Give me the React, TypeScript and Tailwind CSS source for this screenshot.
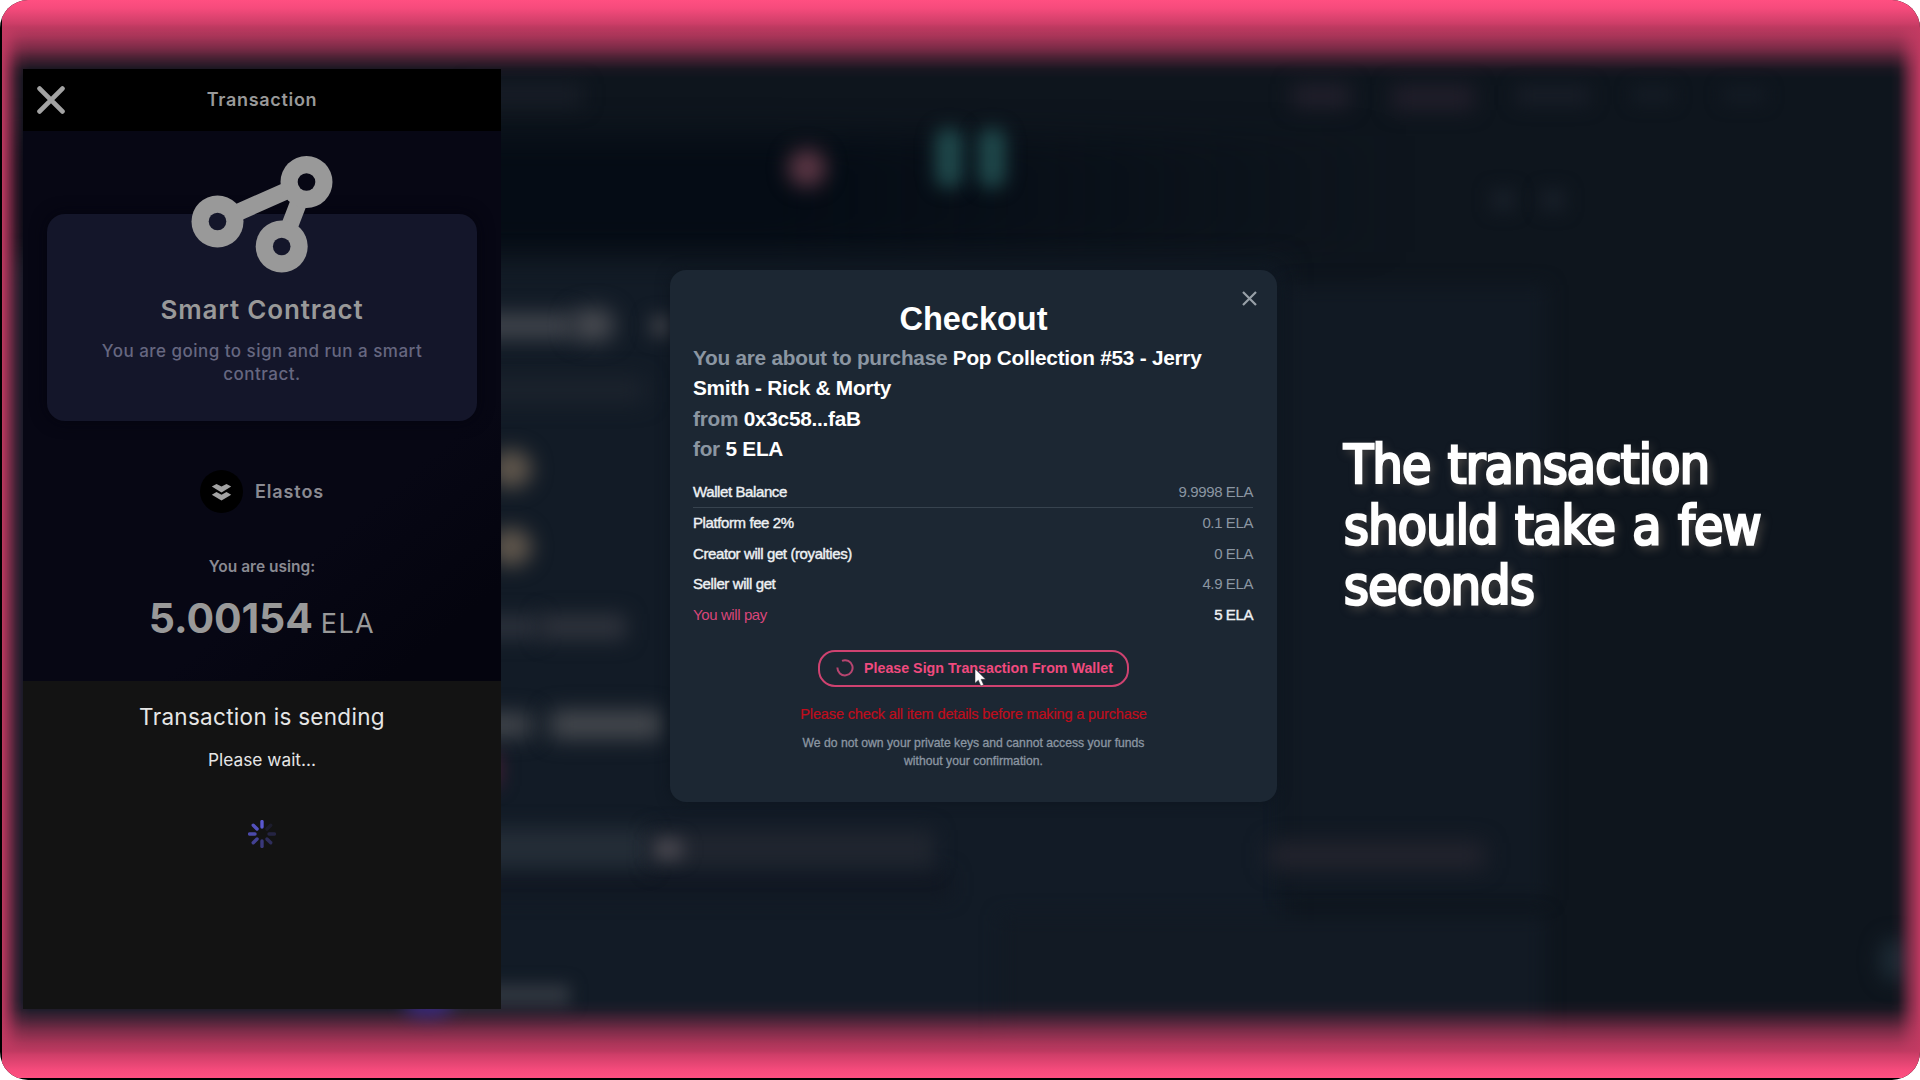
import React from "react";

const glows: string[] = [
  // page bands
  "left-[0px] top-[136px] w-[1400px] h-[116px] bg-[linear-gradient(90deg,#050c15_0%,#050c15_55%,#0e151d00_100%)] blur-[16px]",
  "left-[0px] top-[262px] w-[1285px] h-[770px] bg-[#121b26] blur-[12px]",
  "left-[1285px] top-[285px] w-[262px] h-[615px] bg-[#111923] blur-[9px]",
  "left-[1000px] top-[915px] w-[545px] h-[130px] bg-[#121a24] blur-[9px]",
  "left-[470px] top-[872px] w-[480px] h-[24px] bg-[#111722] blur-[10px]",
  // navigation
  "left-[470px] top-[84px] w-[112px] h-[22px] bg-[#181d27] blur-[10px]",
  "left-[1292px] top-[84px] w-[58px] h-[24px] bg-[#211f2b] blur-[10px]",
  "left-[1392px] top-[85px] w-[82px] h-[25px] bg-[#211e2a] blur-[10px]",
  "left-[1516px] top-[86px] w-[74px] h-[19px] bg-[#181d27] blur-[9px]",
  "left-[1632px] top-[86px] w-[42px] h-[18px] bg-[#141b24] blur-[8px]",
  "left-[1722px] top-[86px] w-[44px] h-[18px] bg-[#131a23] blur-[8px]",
  "left-[1490px] top-[188px] w-[26px] h-[24px] bg-[#161d26] blur-[8px]",
  "left-[1540px] top-[188px] w-[26px] h-[24px] bg-[#161d26] blur-[8px]",
  // artwork
  "left-[788px] top-[149px] w-[38px] h-[38px] rounded-full bg-[#5b3644] blur-[10px]",
  "left-[935px] top-[128px] w-[28px] h-[60px] rounded-[12px] bg-[#1f484b] blur-[9px]",
  "left-[978px] top-[128px] w-[28px] h-[60px] rounded-[12px] bg-[#1f484b] blur-[9px]",
  // item details
  "left-[440px] top-[315px] w-[134px] h-[22px] bg-[#484b52] blur-[11px]",
  "left-[572px] top-[309px] w-[42px] h-[32px] rounded-[14px] bg-[#4a4c52] blur-[11px]",
  "left-[650px] top-[316px] w-[30px] h-[20px] bg-[#3c3f46] blur-[9px]",
  "left-[440px] top-[378px] w-[205px] h-[24px] bg-[#1c232d] blur-[11px]",
  "left-[490px] top-[450px] w-[42px] h-[38px] rounded-full bg-[#5e554b] blur-[10px]",
  "left-[490px] top-[528px] w-[42px] h-[38px] rounded-full bg-[#5e554b] blur-[10px]",
  "left-[440px] top-[616px] w-[100px] h-[22px] bg-[#2d323c] blur-[10px]",
  "left-[540px] top-[614px] w-[86px] h-[26px] bg-[#2e323b] blur-[10px]",
  "left-[440px] top-[714px] w-[92px] h-[22px] bg-[#484b50] blur-[11px]",
  "left-[550px] top-[711px] w-[112px] h-[27px] bg-[#484b50] blur-[11px]",
  "left-[484px] top-[754px] w-[16px] h-[32px] bg-[#4a1e34] blur-[9px]",
  "left-[440px] top-[828px] w-[210px] h-[40px] bg-[#242d37] blur-[10px]",
  "left-[650px] top-[830px] w-[284px] h-[38px] bg-[#20252f] blur-[10px]",
  "left-[654px] top-[840px] w-[28px] h-[18px] bg-[#4e4c54] blur-[9px]",
  "left-[440px] top-[984px] w-[130px] h-[22px] bg-[#30363f] blur-[8px]",
  "left-[1268px] top-[843px] w-[216px] h-[25px] bg-[#24242e] blur-[11px]",
  "left-[1880px] top-[938px] w-[30px] h-[44px] rounded-full bg-[#1d2a34] blur-[10px]",
];

function Backdrop() {
  return (
    <div className="absolute inset-0 overflow-hidden">
      <div className="absolute inset-0 overflow-hidden bg-[#0e151d] [mask-composite:intersect] [mask-image:linear-gradient(180deg,#0000_24px,#0002_36px,#0006_49px,#000a_58px,#000e_69px,#000_78px,#000_1000px,#000e_1009px,#000a_1020px,#0006_1030px,#0002_1043px,#0000_1054px),linear-gradient(90deg,#0000_0px,#0003_4px,#0007_9px,#000b_14px,#000e_20px,#000_28px,#000_1889px,#000e_1896px,#000a_1902px,#0005_1909px,#0000_1918px)]">
        <div className="absolute top-0 left-[-2px] h-[1080px] w-[1920px]">
          {glows.map((g) => (
            <div key={g} className={`absolute ${g}`} />
          ))}
        </div>
      </div>
      <div className="absolute top-[984px] left-[402px] h-[32px] w-[48px] rounded-full bg-[#4a30a0] opacity-75 blur-[9px]" />
    </div>
  );
}

function NetworkIcon() {
  return (
    <svg className="h-[118px] w-[144px]" viewBox="190 155 144 118" fill="none">
      <path d="M217.5 221.5L306.5 182L281.7 246.5" stroke="#999" strokeWidth="17" />
      <g fill="#999">
        <circle cx="217.5" cy="221.5" r="26" />
        <circle cx="306.5" cy="182" r="26" />
        <circle cx="281.7" cy="246.5" r="26" />
      </g>
      <circle cx="217.5" cy="221.5" r="8.8" fill="#14162a" />
      <circle cx="306.5" cy="182" r="8.8" fill="#070714" />
      <circle cx="281.7" cy="246.5" r="8.8" fill="#14162a" />
    </svg>
  );
}

function ElastosLogo() {
  return (
    <svg className="h-[43px] w-[43px]" viewBox="0 0 43 43">
      <circle cx="21.5" cy="21.5" r="21.5" fill="#000" />
      <g fill="#a3a3a3">
        <path d="M11.8 16.6L16.5 14L21.5 16.5L26.5 14L31.2 16.6L21.5 22.6Z" />
        <path d="M11.8 24.8L16.5 22L21.5 24.7L26.5 22L31.2 24.8L21.5 30.6Z" />
      </g>
    </svg>
  );
}

function Spokes() {
  const opacities = [1, 0.13, 0.25, 0.38, 0.55, 0.68, 0.8, 0.9];
  return (
    <svg className="h-7 w-7" viewBox="-14 -14 28 28">
      {opacities.map((o, i) => (
        <path key={i} d="M0 -12.4V-7" stroke="#5a58d0" strokeWidth="3.4" strokeLinecap="round" opacity={o} transform={`rotate(${i * 45})`} />
      ))}
    </svg>
  );
}

function Phone() {
  return (
    <aside className="flex h-[940px] w-[478px] shrink-0 flex-col bg-[#131313] font-[Inter,sans-serif] text-[#999]">
      <header className="grid h-[62px] shrink-0 grid-cols-[56px_1fr_56px] items-center bg-black">
        <svg className="ml-[14px] h-7 w-7" viewBox="0 0 28 28" stroke="#a3a3a3" strokeWidth="4.8" strokeLinecap="round">
          <path d="M2.6 2.6L25.4 25.4M25.4 2.6L2.6 25.4" />
        </svg>
        <h1 className="text-center text-[18px] leading-[26px] font-semibold tracking-[0.7px]">Transaction</h1>
      </header>
      <section className="flex h-[550px] shrink-0 flex-col items-center bg-[linear-gradient(140deg,#070714_0%,#070714_70%,#04040e_90%)]">
        <div className="mt-[83px] flex h-[207px] w-[430px] flex-col items-center rounded-[18px] bg-[#14162a] shadow-[0_0_16px_#04040f]">
          <div className="mt-[-59px] h-[118px]">
            <NetworkIcon />
          </div>
          <h2 className="mt-[20px] text-[26px] leading-[34px] font-semibold tracking-[0.85px]">Smart Contract</h2>
          <p className="mt-[13px] w-[340px] text-center text-[17px] leading-[23px] font-medium tracking-[0.48px] text-[#666780]">
            You are going to sign and run a smart contract.
          </p>
        </div>
        <div className="mt-[49px] flex h-[43px] items-center gap-[12px]">
          <ElastosLogo />
          <span className="text-[18px] font-semibold tracking-[0.9px] text-[#8a8a92]">Elastos</span>
        </div>
        <div className="mt-[43px] text-[15.5px] leading-[22px] font-semibold text-[#8a8a92]">You are using:</div>
        <div className="mt-[15px] flex items-baseline gap-[8px] leading-[50px]">
          <span className="text-[41px] font-bold tracking-[-0.1px]">5.00154</span>
          <span className="text-[27px] tracking-[1.4px]">ELA</span>
        </div>
      </section>
      <section className="flex flex-col items-center text-[#e6e6e6]">
        <div className="mt-[21px] text-[22.5px] leading-[30px] tracking-[0.3px]">Transaction is sending</div>
        <div className="mt-[16px] text-[17.3px] leading-[24px]">Please wait...</div>
        <div className="mt-[48px]">
          <Spokes />
        </div>
      </section>
    </aside>
  );
}

const rows = [
  { label: "Platform fee 2%", value: "0.1 ELA" },
  { label: "Creator will get (royalties)", value: "0 ELA" },
  { label: "Seller will get", value: "4.9 ELA" },
];

function Checkout() {
  return (
    <section className="relative mt-[201px] ml-[169px] flex h-[532px] w-[607px] shrink-0 flex-col rounded-[16px] bg-[#1c2733] px-[24px] font-['Liberation_Sans',Arial,sans-serif] text-white shadow-[0_0_14px_#0d151e]">
      <svg className="absolute top-[21px] right-[20px] h-[15px] w-[15px]" viewBox="0 0 15 15" stroke="#98a0a8" strokeWidth="2.2">
        <path d="M1 1L14 14M14 1L1 14" />
      </svg>
      <h2 className="mt-[29px] text-center text-[32.5px] leading-[40px] font-bold">Checkout</h2>
      <p className="mt-[4px] -ml-px text-[20.8px] leading-[30.4px] font-bold tracking-[-0.26px]">
        <span className="text-[#8b96a2]">You are about to purchase</span> Pop Collection #53 - Jerry
        <br />
        Smith - Rick &amp; Morty
        <br />
        <span className="text-[#8b96a2]">from</span> 0x3c58...faB
        <br />
        <span className="text-[#8b96a2]">for</span> 5 ELA
      </p>
      <div className="mt-[12px] -ml-px text-[15px] tracking-[-0.4px] text-[#8b96a2]">
        <div className="flex h-[31px] items-center justify-between border-b border-[#37434f] pt-[2px]">
          <span className="text-[#eef1f4] [-webkit-text-stroke:0.4px_#eef1f4]">Wallet Balance</span>
          <span>9.9998 ELA</span>
        </div>
        {rows.map((r) => (
          <div key={r.label} className="flex h-[30.5px] items-center justify-between pt-px">
            <span className="text-[#eef1f4] [-webkit-text-stroke:0.4px_#eef1f4]">{r.label}</span>
            <span>{r.value}</span>
          </div>
        ))}
        <div className="flex h-[30.5px] items-center justify-between pt-[2px]">
          <span className="text-[#d9467a]">You will pay</span>
          <span className="text-[#eef1f4] [-webkit-text-stroke:0.4px_#eef1f4]">5 ELA</span>
        </div>
      </div>
      <button className="relative mt-[20px] flex h-[37px] w-[311px] shrink-0 items-center self-center rounded-[17px] border-2 border-[#cf4270] pl-[16px] text-[14.25px] font-bold text-[#f04a7e]">
        <svg className="mr-[10px] h-[18px] w-[18px]" viewBox="0 0 18 18" fill="none" stroke="#b84570" strokeWidth="2">
          <path d="M6 1.8A7.6 7.6 0 1 1 1.4 8.6" />
        </svg>
        <span className="pt-px whitespace-nowrap">Please Sign Transaction From Wallet</span>
        <svg className="absolute top-[16px] left-[154px] h-[20px] w-[14px]" viewBox="0 0 14 20">
          <path d="M1 0.8V15.2L4.3 12.2L6.8 18L9.6 16.8L7.1 11.3H11.6Z" fill="#fff" stroke="#2b2b33" strokeWidth="0.5" />
        </svg>
      </button>
      <p className="mt-[17px] text-center text-[14.6px] leading-[20px] tracking-[-0.18px] text-[#c00d1c] [-webkit-text-stroke:0.2px_#c00d1c]">Please check all item details before making a purchase</p>
      <p className="mt-[10px] w-[360px] self-center text-center text-[12.2px] leading-[18px] text-[#8b96a2] [-webkit-text-stroke:0.3px_#8b96a2]">
        We do not own your private keys and cannot access your funds without your confirmation.
      </p>
    </section>
  );
}

export default function App() {
  return (
    <div className="h-[1080px] w-[1920px] overflow-hidden bg-white">
      <div className="h-full w-full overflow-hidden rounded-[28px] bg-black pb-[2px] pl-[2px]">
        <div className="relative h-full w-full overflow-hidden bg-[linear-gradient(180deg,#ff4f81_0px,#f64b7c_8px,#c43b63_27px,#bd3960_60px,#bd3960_1018px,#c43b63_1051px,#f64b7c_1070px,#ff4f81_1078px)]">
          <Backdrop />
          <main className="relative flex h-full items-start pt-[69px] pl-[21px]">
            <Phone />
            <Checkout />
            <p className="mt-[366px] ml-[67px] w-[480px] font-['DejaVu_Sans_Condensed','DejaVu_Sans',sans-serif] text-[53px] leading-[60.5px] tracking-[-0.7px] [word-spacing:2.7px] [font-stretch:condensed] text-white [-webkit-text-stroke:2.6px_#fff] [text-shadow:3px_4px_10px_#5a534d]">
              The transaction
              <br />
              should take a few
              <br />
              seconds
            </p>
          </main>
        </div>
      </div>
    </div>
  );
}
